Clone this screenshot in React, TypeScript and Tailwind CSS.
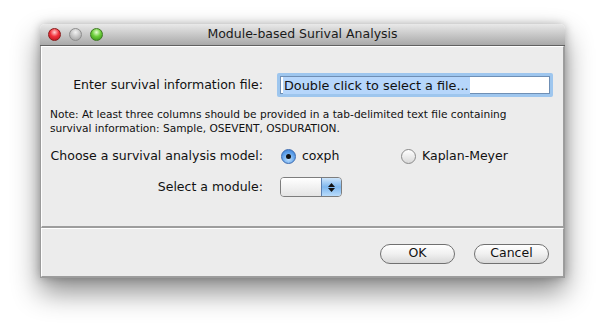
export default function App() {
  const font = { fontFamily: '"DejaVu Sans", "Noto Sans", sans-serif' };
  return (
    <div className="w-[605px] h-[332px] bg-white overflow-hidden pl-[40px] pt-[24px]" style={font}>
      <div className="w-[525px] flex flex-col rounded-t-[5px] shadow-[0_14px_28px_rgba(0,0,0,0.45),0_0_10px_rgba(0,0,0,0.25)]">
        {/* title bar */}
        <div className="h-[22px] flex items-center relative rounded-t-[5px] bg-gradient-to-b from-[#e9e9e9] to-[#a9a9a9] border-b border-[#616161] px-[8px] gap-[8px]">
          <span className="w-[13px] h-[13px] rounded-full bg-[radial-gradient(circle_at_50%_30%,#ffd0d0_0%,#f2323c_45%,#b0101a_100%)] border border-[#8a1a1a]" />
          <span className="w-[13px] h-[13px] rounded-full bg-[radial-gradient(circle_at_50%_30%,#f2f2f2_0%,#c4c4c4_50%,#9a9a9a_100%)] border border-[#8d8d8d]" />
          <span className="w-[13px] h-[13px] rounded-full bg-[radial-gradient(circle_at_50%_30%,#e5ffd0_0%,#6ccd3a_45%,#2f8a14_100%)] border border-[#3e7a22]" />
          <div className="absolute inset-0 flex items-center justify-center text-[12.5px] text-[#1a1a1a]">Module-based Surival Analysis</div>
        </div>
        {/* body */}
        <div className="bg-[#ececec] border-x border-b border-[#9b9b9b]">
          {/* top panel */}
          <div className="border-t border-l border-white border-b-2 border-b-[#9d9d9d] border-r border-r-[#9d9d9d] h-[182px] pt-[26px]">
            <div className="flex items-center h-[24px]">
              <div className="w-[221px] text-right text-[12.5px] text-[#111]">Enter survival information file:</div>
              <div className="ml-[14px] w-[276px] h-[24px] rounded-[2px] bg-[#9ec6ee] p-[3px]">
                <div className="w-full h-full bg-white border border-[#6f8fb5] flex items-center pl-[2px]">
                  <span className="bg-[#b6d6fb] text-[12.8px] text-[#111] px-[1px] leading-[17px]">Double click to select a file...</span>
                </div>
              </div>
            </div>
            <div className="mt-[10px] pl-[8px] text-[10.6px] leading-[14px] text-[#111]">
              <div>Note: At least three columns should be provided in a tab-delimited text file containing</div>
              <div>survival information: Sample, OSEVENT, OSDURATION.</div>
            </div>
            <div className="flex items-center h-[20px] mt-[11px]">
              <div className="w-[221px] text-right text-[12.5px] text-[#111]">Choose a survival analysis model:</div>
              <div className="ml-[18px] flex items-center gap-[6px] w-[120px]">
                <span className="w-[15px] h-[15px] rounded-full border border-[#3a6ab0] bg-[radial-gradient(circle_at_50%_70%,#bfe1ff_0%,#5b9ee8_60%,#3a7bd0_100%)] flex items-center justify-center">
                  <span className="w-[5px] h-[5px] rounded-full bg-[#111]" />
                </span>
                <span className="text-[12.5px] text-[#111]">coxph</span>
              </div>
              <div className="flex items-center gap-[6px]">
                <span className="w-[15px] h-[15px] rounded-full border border-[#8a8a8a] bg-gradient-to-b from-[#ffffff] to-[#d9d9d9]" />
                <span className="text-[12.5px] text-[#111]">Kaplan-Meyer</span>
              </div>
            </div>
            <div className="flex items-center h-[22px] mt-[10px]">
              <div className="w-[221px] text-right text-[12.5px] text-[#111]">Select a module:</div>
              <div className="ml-[17px] w-[62px] h-[20px] rounded-[4px] border border-[#7d7d7d] flex overflow-hidden">
                <div className="flex-1 bg-gradient-to-b from-[#ffffff] to-[#e4e4e4]" />
                <div className="w-[20px] bg-gradient-to-b from-[#cde5fb] via-[#7eb7ee] to-[#b9dcfb] border-l border-[#5a7fb0] flex flex-col items-center justify-center gap-[1px]">
                  <svg width="7" height="4" viewBox="0 0 7 4"><path d="M3.5 0L7 4H0z" fill="#111" /></svg>
                  <svg width="7" height="4" viewBox="0 0 7 4"><path d="M0 0h7L3.5 4z" fill="#111" /></svg>
                </div>
              </div>
            </div>
          </div>
          {/* bottom panel */}
          <div className="border-t border-l border-white border-b border-r border-b-[#9d9d9d] border-r-[#9d9d9d] h-[49px] flex items-center justify-end gap-[19px] pr-[14px] pt-[2px]">
            <button className="w-[75px] h-[20px] rounded-full border border-[#707070] bg-gradient-to-b from-[#ffffff] via-[#f0f0f0] to-[#d8d8d8] text-[12.5px] text-[#111] leading-none">OK</button>
            <button className="w-[75px] h-[20px] rounded-full border border-[#707070] bg-gradient-to-b from-[#ffffff] via-[#f0f0f0] to-[#d8d8d8] text-[12.5px] text-[#111] leading-none">Cancel</button>
          </div>
        </div>
      </div>
    </div>
  );
}
